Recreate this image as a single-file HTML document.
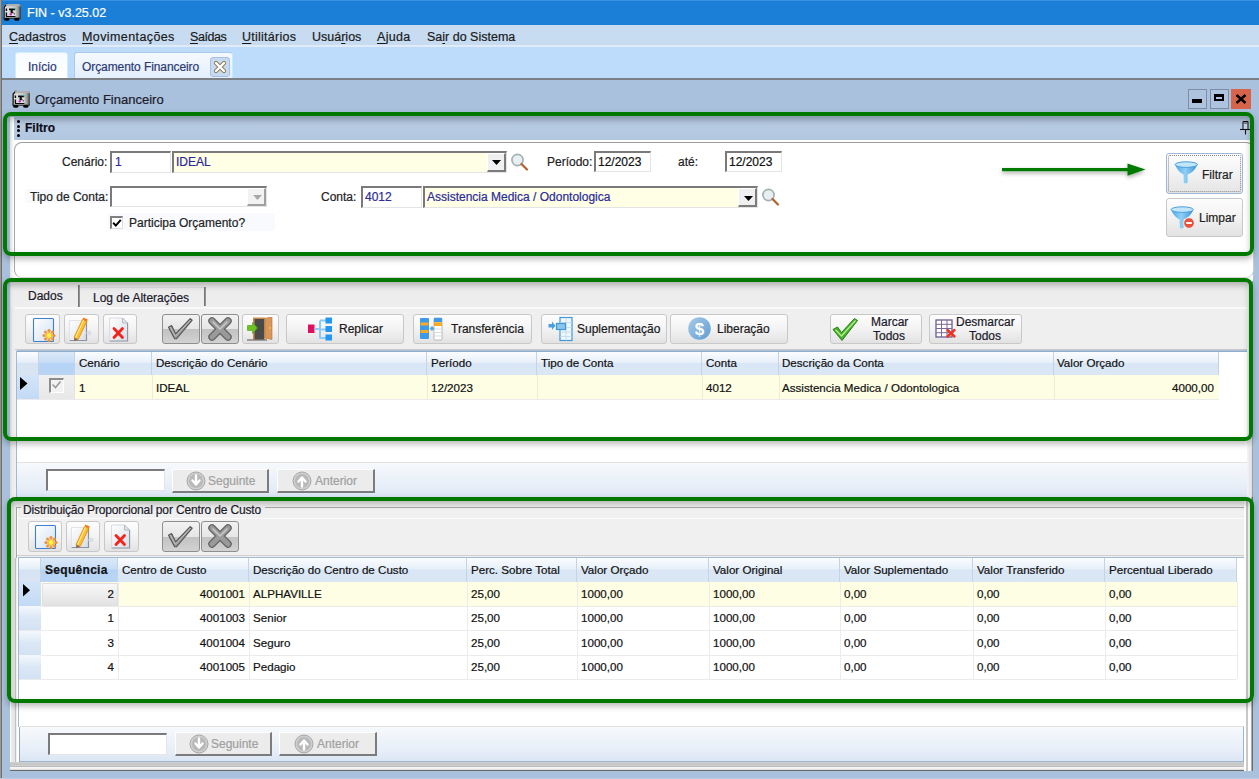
<!DOCTYPE html>
<html><head><meta charset="utf-8">
<style>
*{box-sizing:border-box}
html,body{margin:0;padding:0}
body{width:1259px;height:779px;overflow:hidden;position:relative;background:#a9c1dc;font-family:"Liberation Sans",sans-serif;font-size:12px;color:#000}
.a{position:absolute}
.t{position:absolute;white-space:nowrap;line-height:1;-webkit-text-stroke:0.2px currentColor}
u{text-decoration:none;border-bottom:1px solid #222;}
.inp{position:absolute;background:#fff;border-top:2px solid #7a7a7a;border-left:2px solid #7a7a7a;border-right:1px solid #e4e4e4;border-bottom:1px solid #e4e4e4}
.cmb{position:absolute;background:#ffffe6;border-top:2px solid #7a7a7a;border-left:2px solid #7a7a7a;border-right:1px solid #e4e4e4;border-bottom:1px solid #e4e4e4}
.ddb{position:absolute;right:0;top:0;bottom:0;width:19px;background:#f0f0f0;border-right:2px solid #7c7c7c;border-bottom:2px solid #7c7c7c;border-left:1px solid #fff;border-top:1px solid #fff}
.tb{position:absolute;border:1px solid #c8c8c8;border-radius:3px;background:linear-gradient(#fdfdfd,#f3f3f3 50%,#e2e2e2)}
.tbd{position:absolute;border:1px solid #8e8e8e;border-radius:3px;background:linear-gradient(#f2f2f2,#e6e6e6 50%,#c2c2c2 51%,#d2d2d2)}
.gh{position:absolute;background:linear-gradient(#fbfdff,#e8f0fa 45%,#d9e6f5 50%,#dbe7f5);border-right:1px solid #c5d3e2;height:24px}
.gr{position:absolute}
.green{position:absolute;border:4.6px solid #017901;border-radius:8px;box-shadow:0 3px 6px rgba(0,0,0,.28), inset 0 3px 6px rgba(0,0,0,.24)}
</style></head><body>

<!-- title bar -->
<svg width="0" height="0" style="position:absolute"><defs>
<linearGradient id="icg" x1="0" y1="0" x2="1" y2="0"><stop offset="0" stop-color="#ffffff"/><stop offset="0.12" stop-color="#d8d8d8"/><stop offset="0.7" stop-color="#c0c0c0"/><stop offset="0.85" stop-color="#9a9a9a"/><stop offset="1" stop-color="#303030"/></linearGradient>
<symbol id="appic" viewBox="0 0 18 18"><path d="M3 1 H15.5 Q17.8 1 17.8 3.5 V15 H0.4 V3.6z" fill="url(#icg)"/><path d="M0.4 3.8 L3.2 0.8 H5 L1.8 4.4 V15 H0.4z" fill="#151515"/><path d="M3 1 H15.5 Q17.8 1 17.8 3.5 L15.5 3 H3.5z" fill="#b0b0b0"/><path d="M0.4 14.6 H17.8 V15.8 H0.4z" fill="#2a2a2a"/><ellipse cx="3.8" cy="16.4" rx="2.8" ry="1.3" fill="#000"/><ellipse cx="13.8" cy="16.4" rx="2.8" ry="1.3" fill="#000"/><rect x="2.5" y="4.5" width="10" height="9.5" fill="#dedede"/><path d="M2.7 5.5h1.4v2.4H2.7zM2.7 9.5h1.4v4H2.7zM3 13h9.5v1H3zM6 5.5h6.2v1.8H6zM7.6 7h2.2v3.2H7.6z" fill="#0a0a0a"/><circle cx="7.8" cy="11.2" r="1.2" fill="#d030c8"/><circle cx="11.8" cy="5.4" r="0.9" fill="#30b8b8"/><path d="M10.2 9.6l1.8 1.8" stroke="#111" stroke-width="0.9"/></symbol>
</defs></svg>
<div class="a" style="left:0;top:0;width:1259px;height:25px;background:#1b7fd8"></div>
<div class="a" style="left:0;top:0;width:1259px;height:1px;background:#3a90dc"></div>
<div class="a" style="left:0;top:0;width:1px;height:779px;background:#9a9a9a"></div>
<div class="a" style="left:1px;top:0;width:1px;height:779px;background:#6e6e6e"></div>
<svg class="a" style="left:3px;top:3px" width="18" height="18"><use href="#appic"/></svg>
<div class="t" style="left:27px;top:7px;font-size:12.5px;color:#fff">FIN - v3.25.02</div>

<!-- menu -->
<div class="a" style="left:2px;top:25px;width:1257px;height:21px;background:#c8dcf1"></div>
<div class="a" style="left:2px;top:45px;width:1257px;height:2px;background:#e0ebf7"></div>
<div class="t" style="left:9px;top:31px;font-size:12.5px;color:#1a1a1a"><span style="text-decoration:underline;text-decoration-thickness:1px;text-underline-offset:1.5px">C</span>adastros</div>
<div class="t" style="left:82px;top:31px;font-size:12.5px;color:#1a1a1a;letter-spacing:0.4px"><span style="text-decoration:underline;text-decoration-thickness:1px;text-underline-offset:1.5px">M</span>ovimentações</div>
<div class="t" style="left:190px;top:31px;font-size:12.5px;color:#1a1a1a;letter-spacing:-0.45px"><span style="text-decoration:underline;text-decoration-thickness:1px;text-underline-offset:1.5px">S</span>aídas</div>
<div class="t" style="left:242px;top:31px;font-size:12.5px;color:#1a1a1a;letter-spacing:0.25px"><span style="text-decoration:underline;text-decoration-thickness:1px;text-underline-offset:1.5px">U</span>tilitários</div>
<div class="t" style="left:312px;top:31px;font-size:12.5px;color:#1a1a1a">Usuá<span style="text-decoration:underline;text-decoration-thickness:1px;text-underline-offset:1.5px">r</span>ios</div>
<div class="t" style="left:377px;top:31px;font-size:12.5px;color:#1a1a1a;letter-spacing:0.3px"><span style="text-decoration:underline;text-decoration-thickness:1px;text-underline-offset:1.5px">A</span>juda</div>
<div class="t" style="left:427px;top:31px;font-size:12.5px;color:#1a1a1a">Sa<span style="text-decoration:underline;text-decoration-thickness:1px;text-underline-offset:1.5px">i</span>r do Sistema</div>

<!-- tab strip -->
<div class="a" style="left:2px;top:47px;width:1257px;height:31px;background:#bddcfc"></div>
<div class="a" style="left:15px;top:52px;width:53px;height:26px;background:linear-gradient(#f7fbff,#fff);border:1px solid #d2ecfb;border-bottom:none;border-radius:3px 3px 0 0"></div>
<div class="t" style="left:28px;top:61px;color:#2c3a72">Início</div>
<div class="a" style="left:74px;top:52px;width:159px;height:26px;background:linear-gradient(#f5f9fe,#e4effc);border:1px solid #a9c9ee;border-bottom:none;border-right-color:#b8f0ff;border-radius:3px 3px 0 0"></div>
<div class="t" style="left:82px;top:61px;color:#2c3a72;letter-spacing:-0.08px">Orçamento Financeiro</div>
<div class="a" style="left:210px;top:57px;width:20px;height:20px;background:#c8daf2;border:1px solid #a5c0e6;border-radius:3px"></div>
<svg class="a" style="left:213px;top:60px" width="14" height="14" viewBox="0 0 14 14"><path d="M3 3L11 11M11 3L3 11" stroke="#8a7a50" stroke-width="4.2" stroke-linecap="round"/><path d="M3 3L11 11M11 3L3 11" stroke="#fff" stroke-width="2.4" stroke-linecap="round"/></svg>

<!-- window frame -->
<div class="a" style="left:2px;top:78px;width:1257px;height:2px;background:#7b7f86"></div>

<!-- window title -->
<svg class="a" style="left:12px;top:90px" width="18" height="18"><use href="#appic"/></svg>
<div class="t" style="left:35px;top:93px;font-size:13px;color:#1b1b2b">Orçamento Financeiro</div>
<div class="a" style="left:1188px;top:89px;width:19px;height:20px;border:1px solid #7d8da3;background:#aec4de"></div>
<div class="a" style="left:1192px;top:99px;width:10px;height:4px;background:#000"></div>
<div class="a" style="left:1210px;top:89px;width:19px;height:20px;border:1px solid #7d8da3;background:#aec4de"></div>
<div class="a" style="left:1214px;top:94px;width:10px;height:7px;border:2px solid #000;border-top-width:3px"></div>
<div class="a" style="left:1231px;top:89px;width:20px;height:20px;background:#d5644b"></div>
<svg class="a" style="left:1235px;top:94px" width="12" height="10" viewBox="0 0 12 10"><path d="M1.5 1L10.5 9M10.5 1L1.5 9" stroke="#000" stroke-width="2.4"/></svg>

<!-- ============ FILTRO SECTION ============ -->
<!-- left/right client borders -->
<div class="a" style="left:10px;top:117px;width:4px;height:164px;background:linear-gradient(90deg,#e6e6e6,#fff)"></div>
<div class="a" style="left:10px;top:281px;width:7px;height:216px;background:linear-gradient(90deg,#d8d8d8,#ececec 30%,#f2f2f2)"></div>
<div class="a" style="left:10px;top:497px;width:10px;height:274px;background:linear-gradient(90deg,#fff 0,#fff 10%,#ececec 12%,#e4e4e4 48%,#c2c2c2 52%,#c2c2c2 62%,#fff 66%,#fff 86%,#8ea8c8 88%)"></div>
<div class="a" style="left:1247px;top:281px;width:5px;height:490px;background:linear-gradient(90deg,#f4f4f4,#e0e0e0)"></div>
<div class="a" style="left:1252px;top:281px;width:1px;height:490px;background:#9aa3ad"></div>
<!-- filtro header -->
<div class="a" style="left:14px;top:117px;width:1239px;height:23px;background:linear-gradient(#a9bcd4,#b6cae2 40%,#b2c7e1)"></div>
<div class="a" style="left:17px;top:120px;width:3px;height:3px;border-radius:50%;background:#000"></div>
<div class="a" style="left:17px;top:125px;width:3px;height:3px;border-radius:50%;background:#000"></div>
<div class="a" style="left:17px;top:129px;width:3px;height:3px;border-radius:50%;background:#000"></div>
<div class="a" style="left:17px;top:134px;width:3px;height:3px;border-radius:50%;background:#000"></div>
<div class="t" style="left:25px;top:122px;font-size:12px;font-weight:bold;color:#0d0d1a">Filtro</div>
<svg class="a" style="left:1239px;top:120px" width="12" height="16" viewBox="0 0 12 16"><path d="M4 1.5h5v8H4z" fill="#c4d6ea" stroke="#111" stroke-width="1"/><path d="M4.5 3h4" stroke="#111" stroke-width="0.8"/><path d="M1 9.5h11" stroke="#111" stroke-width="1.1"/><path d="M6.5 10v4.5" stroke="#111" stroke-width="1.1"/></svg>
<!-- panel bg -->
<div class="a" style="left:14px;top:140px;width:1239px;height:141px;background:#fff"></div>
<div class="a" style="left:14px;top:142px;width:1240px;height:136px;border:1px solid #9b9b9b;border-radius:8px;border-right-color:#ccc;border-left-color:#a8a8a8;border-bottom-color:#dcdcdc;background:#fff"></div>

<div class="t" style="left:62px;top:156px;color:#222">Cenário:</div>
<div class="inp" style="left:110px;top:151px;width:61px;height:22px"></div>
<div class="t" style="left:115px;top:156px;color:#2a2a9a">1</div>
<div class="cmb" style="left:172px;top:151px;width:335px;height:22px"><div class="ddb"></div></div>
<div class="t" style="left:176px;top:156px;color:#2a2a9a">IDEAL</div>
<svg class="a" style="left:492px;top:160px" width="9" height="5"><path d="M0 0h9L4.5 5z" fill="#000"/></svg>
<svg class="a" style="left:510px;top:153px" width="20" height="19" viewBox="0 0 20 19"><circle cx="7.5" cy="7" r="5.6" fill="#e8eef1" stroke="#9fb1b2" stroke-width="1.6"/><path d="M11.5 11l5.5 5.5" stroke="#b4612d" stroke-width="2.2" stroke-linecap="round"/></svg>

<div class="t" style="left:547px;top:156px;color:#222">Período:</div>
<div class="inp" style="left:594px;top:151px;width:57px;height:21px"></div>
<div class="t" style="left:598px;top:156px;font-size:12px;color:#111">12/2023</div>
<div class="t" style="left:678px;top:156px;color:#222">até:</div>
<div class="inp" style="left:725px;top:151px;width:57px;height:21px"></div>
<div class="t" style="left:729px;top:156px;font-size:12px;color:#111">12/2023</div>

<div class="a" style="left:25px;top:189px;width:84px;height:14px;background:#f8fafd"></div>
<div class="t" style="left:30px;top:191px;color:#222">Tipo de Conta:</div>
<div class="inp" style="left:110px;top:186px;width:157px;height:21px"><div class="ddb" style="background:#f2f2f2;border-right-color:#a0a0a0;border-bottom-color:#a0a0a0"></div></div>
<svg class="a" style="left:253px;top:195px" width="9" height="5"><path d="M0 0h9L4.5 5z" fill="#a8a8a8"/></svg>

<div class="a" style="left:108px;top:213px;width:167px;height:18px;background:#f8fafd"></div>
<div class="a" style="left:110px;top:216px;width:13px;height:13px;background:#fff;border-top:2px solid #808080;border-left:2px solid #808080;border-right:1px solid #ddd;border-bottom:1px solid #ddd"></div>
<svg class="a" style="left:112px;top:218px" width="10" height="10" viewBox="0 0 10 10"><path d="M1.2 4.8L3.8 7.6L8.8 1.8" fill="none" stroke="#000" stroke-width="2"/></svg>
<div class="t" style="left:129px;top:217px;color:#222">Participa Orçamento?</div>

<div class="t" style="left:321px;top:191px;color:#222">Conta:</div>
<div class="inp" style="left:361px;top:186px;width:61px;height:22px"></div>
<div class="t" style="left:365px;top:191px;color:#2a2a9a">4012</div>
<div class="cmb" style="left:423px;top:186px;width:335px;height:22px"><div class="ddb"></div></div>
<div class="t" style="left:427px;top:191px;color:#2a2a9a">Assistencia Medica / Odontologica</div>
<svg class="a" style="left:744px;top:196px" width="9" height="5"><path d="M0 0h9L4.5 5z" fill="#000"/></svg>
<svg class="a" style="left:761px;top:188px" width="20" height="19" viewBox="0 0 20 19"><circle cx="7.5" cy="7" r="5.6" fill="#e8eef1" stroke="#9fb1b2" stroke-width="1.6"/><path d="M11.5 11l5.5 5.5" stroke="#b4612d" stroke-width="2.2" stroke-linecap="round"/></svg>

<!-- filtrar / limpar -->
<div class="a" style="left:1166px;top:153px;width:77px;height:41px;border:1px solid #9db7d9;border-radius:3px;background:linear-gradient(#fdfdfd,#f2f2f2 50%,#e4e4e4)"><div class="a" style="left:1px;top:1px;right:1px;bottom:1px;border:1px dotted #8a8a8a;border-radius:2px"></div></div>
<svg class="a" style="left:1174px;top:161px" width="25" height="24" viewBox="0 0 25 24"><defs><linearGradient id="fg" x1="0" y1="0" x2="1" y2="0"><stop offset="0" stop-color="#4fa8e6"/><stop offset="0.45" stop-color="#8fd0f6"/><stop offset="1" stop-color="#3d95d8"/></linearGradient></defs><path d="M1 3.5 Q4 11 9.6 13.5 L9.8 21.5 Q11.2 23.5 13.6 21.8 L13.6 13.5 Q20.5 11 23.5 3.5z" fill="url(#fg)"/><ellipse cx="12.2" cy="3.6" rx="11.2" ry="2.8" fill="#bfe6fb" stroke="#4f9fd8" stroke-width="1"/></svg>
<div class="t" style="left:1202px;top:169px;font-size:12px;color:#222">Filtrar</div>
<div class="a" style="left:1166px;top:198px;width:77px;height:39px;border:1px solid #c8c8c8;border-radius:3px;background:linear-gradient(#fdfdfd,#f2f2f2 50%,#e2e2e2)"></div>
<svg class="a" style="left:1170px;top:206px" width="26" height="26" viewBox="0 0 26 26"><path d="M1 3.5 Q4 11 9.6 13.5 L9.8 21.5 Q11.2 23.5 13.6 21.8 L13.6 13.5 Q20.5 11 23.5 3.5z" fill="url(#fg)"/><ellipse cx="12.2" cy="3.6" rx="11.2" ry="2.8" fill="#bfe6fb" stroke="#4f9fd8" stroke-width="1"/><circle cx="19" cy="17" r="5.3" fill="#e5533d" stroke="#f7f7f7" stroke-width="0.8"/><path d="M16.2 17h5.6" stroke="#fff" stroke-width="2"/></svg>
<div class="t" style="left:1199px;top:212px;font-size:12px;color:#222">Limpar</div>

<!-- green arrow -->
<svg class="a" style="left:995px;top:158px" width="160" height="26" viewBox="0 0 160 26"><defs><filter id="sh" x="-10%" y="-50%" width="120%" height="200%"><feGaussianBlur in="SourceAlpha" stdDeviation="2"/><feOffset dy="2"/><feComponentTransfer><feFuncA type="linear" slope="0.35"/></feComponentTransfer><feMerge><feMergeNode/><feMergeNode in="SourceGraphic"/></feMerge></filter></defs><g filter="url(#sh)"><path d="M7 11.6h128" stroke="#067a06" stroke-width="3.4"/><path d="M132.5 5.5L150.5 11.6L132.5 17.7z" fill="#067a06"/></g></svg>

<!-- green box 1 -->
<div class="green" style="left:2.5px;top:112.3px;width:1251px;height:143.3px"></div>


<!-- ============ SYMBOLS ============ -->
<svg width="0" height="0" style="position:absolute">
<defs>
<linearGradient id="docg" x1="0" y1="0" x2="1" y2="1"><stop offset="0" stop-color="#ffffff"/><stop offset="1" stop-color="#cfe0f3"/></linearGradient>
<linearGradient id="docw" x1="0" y1="0" x2="1" y2="1"><stop offset="0" stop-color="#ffffff"/><stop offset="1" stop-color="#d8dde4"/></linearGradient>
<symbol id="i-new" viewBox="0 0 24 26"><rect x="1.5" y="1.5" width="20" height="23" rx="1" fill="url(#docg)" stroke="#3d7fd0" stroke-width="1.1"/><g transform="translate(17,18.5)"><g fill="#f0903a"><circle cx="0" cy="-5" r="1.6"/><circle cx="0" cy="5" r="1.6"/><circle cx="-5" cy="0" r="1.6"/><circle cx="5" cy="0" r="1.6"/><circle cx="-3.5" cy="-3.5" r="1.5"/><circle cx="3.5" cy="3.5" r="1.5"/><circle cx="-3.5" cy="3.5" r="1.5"/><circle cx="3.5" cy="-3.5" r="1.5"/></g><circle r="3.6" fill="#f6b43a"/><circle r="2.4" fill="#fff04a"/></g></symbol>
<symbol id="i-edit" viewBox="0 0 24 26"><path d="M1.5 4.5h17v20h-17z" fill="url(#docw)"/><path d="M18.5 4.5v20h-17" fill="none" stroke="#8a93a3" stroke-width="1.2"/><path d="M1.5 24.5v-20h17" fill="none" stroke="#dfe3ea" stroke-width="1"/><ellipse cx="21" cy="17" rx="2.6" ry="2.2" fill="#dadee4"/><path d="M6 21.5 L14.5 3.5 L18.8 5.5 L10.2 23.5z" fill="#fbc02d" stroke="#e28a10" stroke-width="0.8"/><path d="M14.5 3.5 L18.8 5.5 L19.8 3.4 L15.5 1.4z" fill="#f57c22"/><path d="M6 21.5 L10.2 23.5 L6.3 25.2z" fill="#8a6a4a"/><path d="M15.6 4.2 L7.5 21.8" stroke="#fff3a0" stroke-width="1"/></symbol>
<symbol id="i-del" viewBox="0 0 24 26"><path d="M1.6 1h13l5 5v18H1.6z" fill="url(#docw)"/><path d="M19.6 6v18H1.6" fill="none" stroke="#8a93a3" stroke-width="1.1"/><path d="M1.6 24V1h13" fill="none" stroke="#d6dae2" stroke-width="1"/><path d="M14.6 1v5h5z" fill="#e4e8ee" stroke="#a6adb8" stroke-width="0.8"/><path d="M6 11.5l8.5 9M14.5 11.5l-8.5 9" stroke="#f3231b" stroke-width="2.8" stroke-linecap="round"/></symbol>
<symbol id="i-chk" viewBox="0 0 30 24"><path d="M2.5 10.2 L5.6 8.6 L9.6 16.8 L24.2 1.6 L26.2 3.2 L10.4 21.8 L8.6 21.8z" fill="#9a9a9a" stroke="#555" stroke-width="1.1" stroke-linejoin="round"/><path d="M4.2 10 L9.4 19.2 L24.6 3" fill="none" stroke="#d0d0d0" stroke-width="0.7"/></symbol>
<symbol id="i-x" viewBox="0 0 26 26"><path d="M5 5 L21 21 M21 5 L5 21" stroke="#666" stroke-width="7.5" stroke-linecap="round"/><path d="M5 5 L21 21 M21 5 L5 21" stroke="#9a9a9a" stroke-width="5" stroke-linecap="round"/><path d="M6 6 L13 13 M20 6 L13 13" stroke="#c9c9c9" stroke-width="1.5" stroke-linecap="round"/></symbol>
<symbol id="i-srch" viewBox="0 0 20 19"><circle cx="7.5" cy="7" r="5.6" fill="#e8eef1" stroke="#9fb1b2" stroke-width="1.6"/><path d="M11.5 11l5.5 5.5" stroke="#b4612d" stroke-width="2.2" stroke-linecap="round"/></symbol>
<symbol id="i-down" viewBox="0 0 20 20"><circle cx="10" cy="10" r="9" fill="#cfcfcf" stroke="#a8a8a8" stroke-width="1"/><circle cx="10" cy="10" r="7" fill="#b9b9b9"/><path d="M10 4.5v8M6.5 9.5L10 13.5L13.5 9.5" stroke="#fff" stroke-width="2.4" fill="none" stroke-linecap="round" stroke-linejoin="round"/></symbol>
<symbol id="i-up" viewBox="0 0 20 20"><circle cx="10" cy="10" r="9" fill="#cfcfcf" stroke="#a8a8a8" stroke-width="1"/><circle cx="10" cy="10" r="7" fill="#b9b9b9"/><path d="M10 15.5v-8M6.5 10.5L10 6.5L13.5 10.5" stroke="#fff" stroke-width="2.4" fill="none" stroke-linecap="round" stroke-linejoin="round"/></symbol>
</defs></svg>

<!-- ============ DADOS SECTION ============ -->
<div class="a" style="left:11px;top:281px;width:1236px;height:27px;background:linear-gradient(#e2e2e2,#ececec 35%,#eeeeee)"></div>
<div class="a" style="left:15px;top:307px;width:1232px;height:2px;background:#fafafa"></div>
<div class="a" style="left:15px;top:309px;width:1232px;height:40px;background:#efefef"></div>
<div class="a" style="left:15px;top:349px;width:1232px;height:1px;background:#cacaca"></div>
<!-- tabs -->
<div class="a" style="left:78px;top:285px;width:2px;height:22px;background:linear-gradient(90deg,#6a6a6a,#a0a0a0)"></div>
<div class="a" style="left:204px;top:287px;width:2px;height:19px;background:linear-gradient(90deg,#6a6a6a,#a0a0a0)"></div>
<div class="a" style="left:80px;top:287px;width:124px;height:1px;background:#dcdcdc"></div>
<div class="t" style="left:28px;top:290px;color:#1a1a2a">Dados</div>
<div class="t" style="left:93px;top:292px;color:#1a1a2a">Log de Alterações</div>

<!-- toolbar buttons -->
<div class="tb" style="left:25px;top:314px;width:35px;height:30px"></div>
<svg class="a" style="left:32px;top:317px" width="24" height="26"><use href="#i-new"/></svg>
<div class="tb" style="left:64px;top:314px;width:35px;height:30px"></div>
<svg class="a" style="left:68px;top:316px" width="24" height="26"><use href="#i-edit"/></svg>
<div class="tb" style="left:103px;top:314px;width:34px;height:30px"></div>
<svg class="a" style="left:108px;top:317px" width="24" height="26"><use href="#i-del"/></svg>
<div class="tbd" style="left:162px;top:314px;width:38px;height:30px"></div>
<svg class="a" style="left:166px;top:317px" width="30" height="24"><use href="#i-chk"/></svg>
<div class="tbd" style="left:201px;top:314px;width:38px;height:30px"></div>
<svg class="a" style="left:207px;top:316px" width="26" height="26"><use href="#i-x"/></svg>
<div class="tb" style="left:242px;top:314px;width:37px;height:30px"></div>
<svg class="a" style="left:246px;top:317px" width="30" height="24" viewBox="0 0 30 24"><path d="M7 0.5h12v22H7z" fill="#c98a4a"/><path d="M8.5 2h9.5v20.5H8.5z" fill="#4a4a4a"/><path d="M19 1.5L26 -0.5V22.5L19 21z" fill="#d8965a" stroke="#b27238" stroke-width="0.6"/><circle cx="24" cy="11" r="0.9" fill="#f2c84a"/><path d="M1 23h20" stroke="#555" stroke-width="1"/><path d="M1.5 8.5h5V5.5l5 5.5-5 5.5v-3h-5z" fill="#6cc21f" stroke="#4a9a12" stroke-width="0.6"/></svg>

<div class="tb" style="left:286px;top:314px;width:118px;height:30px"></div>
<svg class="a" style="left:306px;top:316px" width="28" height="26" viewBox="0 0 28 26"><rect x="2" y="8.5" width="6.5" height="8.5" fill="#e01060"/><path d="M8.5 13H14M14 4.5V22.5M14 4.5H20M14 13.5H20M14 22H20" stroke="#8ccaf6" stroke-width="2"/><rect x="19.5" y="1.5" width="6.5" height="6" fill="#2196f3"/><rect x="19.5" y="10" width="6.5" height="6" fill="#2196f3"/><rect x="19.5" y="18.5" width="6.5" height="6" fill="#2196f3"/></svg>
<div class="t" style="left:339px;top:323px;color:#1a1a1a">Replicar</div>

<div class="tb" style="left:413px;top:314px;width:119px;height:30px"></div>
<svg class="a" style="left:419px;top:317px" width="24" height="24" viewBox="0 0 24 24"><rect x="1" y="1" width="9" height="21" rx="1" fill="#3d9ae8"/><rect x="1.5" y="5.5" width="8" height="3" fill="#f7a826"/><rect x="1.5" y="13" width="8" height="3" fill="#f7a826"/><rect x="15" y="1" width="8" height="22" rx="1" fill="#fff" stroke="#b8b8b8" stroke-width="1"/><rect x="15" y="1" width="8" height="4" fill="#3d9ae8"/><rect x="15" y="5.2" width="8" height="3.8" fill="#f7a826"/><path d="M16 12h6M16 15.5h6M16 19h6" stroke="#cfdfe8" stroke-width="1"/><path d="M10.5 11.5L13 9L15.5 11.5L13 14z" fill="#5aa6dd"/></svg>
<div class="t" style="left:451px;top:323px;color:#1a1a1a">Transferência</div>

<div class="tb" style="left:541px;top:314px;width:126px;height:30px"></div>
<svg class="a" style="left:547px;top:316px" width="28" height="26" viewBox="0 0 28 26"><rect x="13" y="1.5" width="12" height="23" fill="#eef7fd" stroke="#3f97d6" stroke-width="1.2"/><path d="M13 6.5H25M13 11.5H25M13 16H25M13 20.5H25M19 1.5V24.5" stroke="#bfd6e6" stroke-width="0.8"/><rect x="9.5" y="7.5" width="9" height="6" fill="#8cc4ea" stroke="#3f97d6" stroke-width="1.2"/><path d="M1.5 8h3.5V5.5l3.5 4.3-3.5 4.3v-2.6H1.5z" fill="#4d9fe0"/></svg>
<div class="t" style="left:577px;top:323px;color:#1a1a1a">Suplementação</div>

<div class="tb" style="left:670px;top:314px;width:118px;height:30px"></div>
<svg class="a" style="left:688px;top:317px" width="24" height="24" viewBox="0 0 24 24"><defs><linearGradient id="lg$" x1="0" y1="0" x2="1" y2="1"><stop offset="0" stop-color="#a9cae8"/><stop offset="1" stop-color="#5e9ed3"/></linearGradient></defs><circle cx="11.5" cy="11.5" r="11.3" fill="url(#lg$)"/><text x="11.5" y="17.5" font-family="Liberation Sans" font-weight="bold" font-size="17" fill="#fff" text-anchor="middle">$</text></svg>
<div class="t" style="left:717px;top:323px;color:#1a1a1a">Liberação</div>

<div class="tb" style="left:830px;top:314px;width:92px;height:30px"></div>
<svg class="a" style="left:832px;top:317px" width="27" height="25" viewBox="0 0 27 25"><path d="M1 12.5L5.5 10L9.5 15.5L22.5 1.5L25.5 3.5L10 23.5z" fill="#43b02a" stroke="#2a7f18" stroke-width="1"/><path d="M3.5 12.8L9.5 19L23.5 3.5" fill="none" stroke="#b7ef8a" stroke-width="1.3"/></svg>
<div class="t" style="left:871px;top:316px;color:#1a1a2a">Marcar</div>
<div class="t" style="left:873px;top:330px;color:#1a1a2a">Todos</div>

<div class="tb" style="left:929px;top:314px;width:93px;height:30px"></div>
<svg class="a" style="left:935px;top:319px" width="22" height="20" viewBox="0 0 22 20"><rect x="1" y="1" width="16" height="17" fill="#fff" stroke="#6c5c8c" stroke-width="1.3"/><path d="M1 5.3H17M1 9.5H17M1 13.7H17M6.5 1V18M12 1V18" stroke="#7a6a98" stroke-width="1"/><path d="M12.5 11l7 6.5M19.5 11l-7 6.5" stroke="#ee3322" stroke-width="2.4" stroke-linecap="round"/></svg>
<div class="t" style="left:956px;top:316px;color:#1a1a2a">Desmarcar</div>
<div class="t" style="left:969px;top:330px;color:#1a1a2a">Todos</div>

<!-- grid 1 -->
<div class="a" style="left:16px;top:351px;width:1231px;height:111px;background:#fff;border-left:1px solid #a3b9d2;border-top:1px solid #93aeca"></div>
<div class="a" style="left:16px;top:462px;width:1px;height:35px;background:#a3b9d2"></div>
<div class="gh" style="left:17px;top:352px;height:23px;width:22px;background:linear-gradient(#fbfdff,#e6eef8 45%,#d6e3f2 50%,#d9e5f3)"></div>
<div class="gh" style="left:39px;top:352px;height:23px;width:36px;background:linear-gradient(#dbe9f9,#c8ddf6 45%,#b5d3f6 50%,#b9d5f5)"></div>
<div class="gh" style="left:75px;top:352px;height:23px;width:77px"></div>
<div class="gh" style="left:152px;top:352px;height:23px;width:275px"></div>
<div class="gh" style="left:427px;top:352px;height:23px;width:110px"></div>
<div class="gh" style="left:537px;top:352px;height:23px;width:165px"></div>
<div class="gh" style="left:702px;top:352px;height:23px;width:77px"></div>
<div class="gh" style="left:779px;top:352px;height:23px;width:275px"></div>
<div class="gh" style="left:1054px;top:352px;height:23px;width:165px"></div>
<div class="t" style="left:79px;top:357px;font-size:11.6px;color:#111">Cenário</div>
<div class="t" style="left:156px;top:357px;font-size:11.6px;color:#111">Descrição do Cenário</div>
<div class="t" style="left:431px;top:357px;font-size:11.6px;color:#111">Período</div>
<div class="t" style="left:541px;top:357px;font-size:11.6px;color:#111">Tipo de Conta</div>
<div class="t" style="left:706px;top:357px;font-size:11.6px;color:#111">Conta</div>
<div class="t" style="left:782px;top:357px;font-size:11.6px;color:#111">Descrição da Conta</div>
<div class="t" style="left:1057px;top:357px;font-size:11.6px;color:#111">Valor Orçado</div>
<!-- row -->
<div class="a" style="left:17px;top:375px;width:22px;height:24px;background:linear-gradient(#d3e4f8,#c3daf6)"></div>
<svg class="a" style="left:20px;top:377px" width="8" height="13"><path d="M0 0L7.5 6.5L0 13z" fill="#000"/></svg>
<div class="a" style="left:39px;top:375px;width:36px;height:24px;background:linear-gradient(#f0f0f0,#e8e8e8);border-right:1px solid #e3e3e3"></div>
<div class="a" style="left:49px;top:378px;width:15px;height:15px;background:#f2f2f2;border-top:2px solid #8c8c8c;border-left:2px solid #8c8c8c;border-right:1px solid #fff;border-bottom:1px solid #fff"></div>
<svg class="a" style="left:51px;top:380px" width="11" height="10" viewBox="0 0 11 10"><path d="M1.5 4.5L4.5 7.5L9.5 1.5" fill="none" stroke="#9a9a9a" stroke-width="1.6"/></svg>
<div class="a" style="left:75px;top:375px;width:1144px;height:24px;background:#fefee4"></div>
<div class="a" style="left:152px;top:375px;width:1px;height:24px;background:#ececd8"></div>
<div class="a" style="left:427px;top:375px;width:1px;height:24px;background:#ececd8"></div>
<div class="a" style="left:537px;top:375px;width:1px;height:24px;background:#ececd8"></div>
<div class="a" style="left:702px;top:375px;width:1px;height:24px;background:#ececd8"></div>
<div class="a" style="left:779px;top:375px;width:1px;height:24px;background:#ececd8"></div>
<div class="a" style="left:1054px;top:375px;width:1px;height:24px;background:#ececd8"></div>
<div class="a" style="left:17px;top:399px;width:1202px;height:1px;background:#ebebeb"></div>
<div class="t" style="left:79px;top:382px;font-size:11.6px;color:#111">1</div>
<div class="t" style="left:156px;top:382px;font-size:11.6px;color:#111">IDEAL</div>
<div class="t" style="left:431px;top:382px;font-size:11.6px;color:#111">12/2023</div>
<div class="t" style="left:706px;top:382px;font-size:11.6px;color:#111">4012</div>
<div class="t" style="left:782px;top:382px;font-size:11.6px;color:#111">Assistencia Medica / Odontologica</div>
<div class="t" style="left:1172px;top:382px;font-size:11.6px;color:#111">4000,00</div>

<!-- nav 1 -->
<div class="a" style="left:17px;top:462px;width:1230px;height:35px;background:linear-gradient(#f7f9fc,#e6eef8 70%,#dbe6f4);border-top:1px solid #e8e0e0"></div>
<div class="inp" style="left:46px;top:469px;width:119px;height:22px"></div>
<div class="a" style="left:172px;top:469px;width:97px;height:24px;background:#ececec;border-top:1px solid #fff;border-left:1px solid #fff;border-right:2px solid #7c7c7c;border-bottom:2px solid #7c7c7c"></div>
<svg class="a" style="left:186px;top:471px" width="20" height="20"><use href="#i-down"/></svg>
<div class="t" style="left:208px;top:475px;color:#a0a0a0">Seguinte</div>
<div class="a" style="left:277px;top:469px;width:98px;height:24px;background:#ececec;border-top:1px solid #fff;border-left:1px solid #fff;border-right:2px solid #7c7c7c;border-bottom:2px solid #7c7c7c"></div>
<svg class="a" style="left:292px;top:471px" width="20" height="20"><use href="#i-up"/></svg>
<div class="t" style="left:315px;top:475px;color:#a0a0a0">Anterior</div>

<!-- green box 2 -->
<div class="green" style="left:2.5px;top:277.8px;width:1250px;height:163.5px"></div>


<!-- ============ DISTRIBUICAO SECTION ============ -->
<div class="a" style="left:14px;top:497px;width:1233px;height:61px;background:#f0f0f0"></div>
<div class="a" style="left:16px;top:507px;width:1231px;height:51px;border-left:1px solid #a8a8a8;border-top:1px solid #a8a8a8;border-right:1px solid #a8a8a8"></div>
<div class="a" style="left:17px;top:518px;width:1228px;height:1px;background:#fbfbfb"></div>
<div class="a" style="left:17px;top:508px;width:1px;height:250px;background:#fff"></div>
<div class="a" style="left:21px;top:501px;width:244px;height:14px;background:#f0f0f0"></div>
<div class="t" style="left:23px;top:504px;color:#1a1a2a;letter-spacing:-0.15px">Distribuição Proporcional por Centro de Custo</div>
<div class="a" style="left:17px;top:555px;width:1228px;height:1px;background:#cfcfcf"></div>

<div class="tb" style="left:28px;top:521px;width:34px;height:31px"></div>
<svg class="a" style="left:34px;top:524px" width="24" height="26"><use href="#i-new"/></svg>
<div class="tb" style="left:66px;top:521px;width:34px;height:31px"></div>
<svg class="a" style="left:70px;top:523px" width="24" height="26"><use href="#i-edit"/></svg>
<div class="tb" style="left:104px;top:521px;width:35px;height:31px"></div>
<svg class="a" style="left:110px;top:524px" width="24" height="26"><use href="#i-del"/></svg>
<div class="tbd" style="left:162px;top:521px;width:38px;height:31px"></div>
<svg class="a" style="left:166px;top:525px" width="30" height="24"><use href="#i-chk"/></svg>
<div class="tbd" style="left:201px;top:521px;width:38px;height:31px"></div>
<svg class="a" style="left:207px;top:523px" width="26" height="26"><use href="#i-x"/></svg>

<!-- grid 2 -->
<div class="a" style="left:18px;top:557px;width:1227px;height:170px;background:#fff;border-left:1px solid #a3b9d2;border-top:1px solid #a3b9d2"></div>
<div class="gh" style="left:19px;top:558px;width:22px;background:linear-gradient(#fbfdff,#e6eef8 45%,#d6e3f2 50%,#d9e5f3)"></div>
<div class="gh" style="left:41px;top:558px;width:77px;background:linear-gradient(#dbe9f9,#c8ddf6 45%,#b5d3f6 50%,#b9d5f5)"></div>
<div class="t" style="left:45px;top:564px;font-weight:bold;color:#111;letter-spacing:0.3px">Sequência</div>
<div class="gh" style="left:118px;top:558px;width:131px"></div>
<div class="t" style="left:122px;top:564px;font-size:11.6px;color:#111">Centro de Custo</div>
<div class="gh" style="left:249px;top:558px;width:218px"></div>
<div class="t" style="left:253px;top:564px;font-size:11.6px;color:#111">Descrição do Centro de Custo</div>
<div class="gh" style="left:467px;top:558px;width:110px"></div>
<div class="t" style="left:471px;top:564px;font-size:11.6px;color:#111">Perc. Sobre Total</div>
<div class="gh" style="left:577px;top:558px;width:132px"></div>
<div class="t" style="left:581px;top:564px;font-size:11.6px;color:#111">Valor Orçado</div>
<div class="gh" style="left:709px;top:558px;width:131px"></div>
<div class="t" style="left:713px;top:564px;font-size:11.6px;color:#111">Valor Original</div>
<div class="gh" style="left:840px;top:558px;width:133px"></div>
<div class="t" style="left:844px;top:564px;font-size:11.6px;color:#111">Valor Suplementado</div>
<div class="gh" style="left:973px;top:558px;width:132px"></div>
<div class="t" style="left:977px;top:564px;font-size:11.6px;color:#111">Valor Transferido</div>
<div class="gh" style="left:1105px;top:558px;width:132px"></div>
<div class="t" style="left:1109px;top:564px;font-size:11.6px;color:#111">Percentual Liberado</div>
<div class="a" style="left:19px;top:582px;width:22px;height:24px;background:linear-gradient(#d3e4f8,#c3daf6)"></div>
<div class="a" style="left:41px;top:582px;width:1196px;height:24px;background:#fefee4"></div>
<div class="a" style="left:42px;top:583px;width:76px;height:23px;background:linear-gradient(#f8f8f8,#ebebeb 60%,#e2e2e2);border:1px solid #e0e0e0"></div>
<svg class="a" style="left:23px;top:584px" width="8" height="13"><path d="M0 0L7 6.2L0 12.4z" fill="#000"/></svg>
<div class="a" style="left:118px;top:582px;width:1px;height:24px;background:#ececec"></div>
<div class="a" style="left:249px;top:582px;width:1px;height:24px;background:#ececec"></div>
<div class="a" style="left:467px;top:582px;width:1px;height:24px;background:#ececec"></div>
<div class="a" style="left:577px;top:582px;width:1px;height:24px;background:#ececec"></div>
<div class="a" style="left:709px;top:582px;width:1px;height:24px;background:#ececec"></div>
<div class="a" style="left:840px;top:582px;width:1px;height:24px;background:#ececec"></div>
<div class="a" style="left:973px;top:582px;width:1px;height:24px;background:#ececec"></div>
<div class="a" style="left:1105px;top:582px;width:1px;height:24px;background:#ececec"></div>
<div class="a" style="left:19px;top:606px;width:1218px;height:1px;background:#ebebeb"></div>
<div class="t" style="right:1145px;top:588px;font-size:11.6px;color:#111">2</div>
<div class="t" style="right:1014px;top:588px;font-size:11.6px;color:#111">4001001</div>
<div class="t" style="left:253px;top:588px;font-size:11.6px;color:#111">ALPHAVILLE</div>
<div class="t" style="left:471px;top:588px;font-size:11.6px;color:#111">25,00</div>
<div class="t" style="left:581px;top:588px;font-size:11.6px;color:#111">1000,00</div>
<div class="t" style="left:713px;top:588px;font-size:11.6px;color:#111">1000,00</div>
<div class="t" style="left:844px;top:588px;font-size:11.6px;color:#111">0,00</div>
<div class="t" style="left:977px;top:588px;font-size:11.6px;color:#111">0,00</div>
<div class="t" style="left:1109px;top:588px;font-size:11.6px;color:#111">0,00</div>
<div class="a" style="left:19px;top:606px;width:22px;height:24px;background:linear-gradient(#f4f8fd,#dbe7f5 50%,#d3e2f3)"></div>
<div class="a" style="left:118px;top:606px;width:1px;height:24px;background:#ececec"></div>
<div class="a" style="left:249px;top:606px;width:1px;height:24px;background:#ececec"></div>
<div class="a" style="left:467px;top:606px;width:1px;height:24px;background:#ececec"></div>
<div class="a" style="left:577px;top:606px;width:1px;height:24px;background:#ececec"></div>
<div class="a" style="left:709px;top:606px;width:1px;height:24px;background:#ececec"></div>
<div class="a" style="left:840px;top:606px;width:1px;height:24px;background:#ececec"></div>
<div class="a" style="left:973px;top:606px;width:1px;height:24px;background:#ececec"></div>
<div class="a" style="left:1105px;top:606px;width:1px;height:24px;background:#ececec"></div>
<div class="a" style="left:19px;top:630px;width:1218px;height:1px;background:#ebebeb"></div>
<div class="t" style="right:1145px;top:612px;font-size:11.6px;color:#111">1</div>
<div class="t" style="right:1014px;top:612px;font-size:11.6px;color:#111">4001003</div>
<div class="t" style="left:253px;top:612px;font-size:11.6px;color:#111">Senior</div>
<div class="t" style="left:471px;top:612px;font-size:11.6px;color:#111">25,00</div>
<div class="t" style="left:581px;top:612px;font-size:11.6px;color:#111">1000,00</div>
<div class="t" style="left:713px;top:612px;font-size:11.6px;color:#111">1000,00</div>
<div class="t" style="left:844px;top:612px;font-size:11.6px;color:#111">0,00</div>
<div class="t" style="left:977px;top:612px;font-size:11.6px;color:#111">0,00</div>
<div class="t" style="left:1109px;top:612px;font-size:11.6px;color:#111">0,00</div>
<div class="a" style="left:19px;top:631px;width:22px;height:24px;background:linear-gradient(#f4f8fd,#dbe7f5 50%,#d3e2f3)"></div>
<div class="a" style="left:118px;top:631px;width:1px;height:24px;background:#ececec"></div>
<div class="a" style="left:249px;top:631px;width:1px;height:24px;background:#ececec"></div>
<div class="a" style="left:467px;top:631px;width:1px;height:24px;background:#ececec"></div>
<div class="a" style="left:577px;top:631px;width:1px;height:24px;background:#ececec"></div>
<div class="a" style="left:709px;top:631px;width:1px;height:24px;background:#ececec"></div>
<div class="a" style="left:840px;top:631px;width:1px;height:24px;background:#ececec"></div>
<div class="a" style="left:973px;top:631px;width:1px;height:24px;background:#ececec"></div>
<div class="a" style="left:1105px;top:631px;width:1px;height:24px;background:#ececec"></div>
<div class="a" style="left:19px;top:655px;width:1218px;height:1px;background:#ebebeb"></div>
<div class="t" style="right:1145px;top:637px;font-size:11.6px;color:#111">3</div>
<div class="t" style="right:1014px;top:637px;font-size:11.6px;color:#111">4001004</div>
<div class="t" style="left:253px;top:637px;font-size:11.6px;color:#111">Seguro</div>
<div class="t" style="left:471px;top:637px;font-size:11.6px;color:#111">25,00</div>
<div class="t" style="left:581px;top:637px;font-size:11.6px;color:#111">1000,00</div>
<div class="t" style="left:713px;top:637px;font-size:11.6px;color:#111">1000,00</div>
<div class="t" style="left:844px;top:637px;font-size:11.6px;color:#111">0,00</div>
<div class="t" style="left:977px;top:637px;font-size:11.6px;color:#111">0,00</div>
<div class="t" style="left:1109px;top:637px;font-size:11.6px;color:#111">0,00</div>
<div class="a" style="left:19px;top:655px;width:22px;height:24px;background:linear-gradient(#f4f8fd,#dbe7f5 50%,#d3e2f3)"></div>
<div class="a" style="left:118px;top:655px;width:1px;height:24px;background:#ececec"></div>
<div class="a" style="left:249px;top:655px;width:1px;height:24px;background:#ececec"></div>
<div class="a" style="left:467px;top:655px;width:1px;height:24px;background:#ececec"></div>
<div class="a" style="left:577px;top:655px;width:1px;height:24px;background:#ececec"></div>
<div class="a" style="left:709px;top:655px;width:1px;height:24px;background:#ececec"></div>
<div class="a" style="left:840px;top:655px;width:1px;height:24px;background:#ececec"></div>
<div class="a" style="left:973px;top:655px;width:1px;height:24px;background:#ececec"></div>
<div class="a" style="left:1105px;top:655px;width:1px;height:24px;background:#ececec"></div>
<div class="a" style="left:19px;top:679px;width:1218px;height:1px;background:#ebebeb"></div>
<div class="t" style="right:1145px;top:661px;font-size:11.6px;color:#111">4</div>
<div class="t" style="right:1014px;top:661px;font-size:11.6px;color:#111">4001005</div>
<div class="t" style="left:253px;top:661px;font-size:11.6px;color:#111">Pedagio</div>
<div class="t" style="left:471px;top:661px;font-size:11.6px;color:#111">25,00</div>
<div class="t" style="left:581px;top:661px;font-size:11.6px;color:#111">1000,00</div>
<div class="t" style="left:713px;top:661px;font-size:11.6px;color:#111">1000,00</div>
<div class="t" style="left:844px;top:661px;font-size:11.6px;color:#111">0,00</div>
<div class="t" style="left:977px;top:661px;font-size:11.6px;color:#111">0,00</div>
<div class="t" style="left:1109px;top:661px;font-size:11.6px;color:#111">0,00</div>

<div class="a" style="left:1237px;top:582px;width:1px;height:97px;background:#ececec"></div>
<div class="a" style="left:1244px;top:557px;width:1px;height:170px;background:#a3b9d2"></div>
<!-- nav 2 -->
<div class="a" style="left:20px;top:726px;width:1224px;height:36px;background:linear-gradient(#f7f9fc,#e6eef8 70%,#dbe6f4);border-top:1px solid #e8e0e0;border-bottom:1px solid #9db5cf;border-right:1px solid #9db5cf"></div>
<div class="inp" style="left:48px;top:733px;width:119px;height:22px"></div>
<div class="a" style="left:175px;top:732px;width:97px;height:24px;background:#ececec;border-top:1px solid #fff;border-left:1px solid #fff;border-right:2px solid #7c7c7c;border-bottom:2px solid #7c7c7c"></div>
<svg class="a" style="left:189px;top:734px" width="20" height="20"><use href="#i-down"/></svg>
<div class="t" style="left:211px;top:738px;color:#a0a0a0">Seguinte</div>
<div class="a" style="left:279px;top:732px;width:98px;height:24px;background:#ececec;border-top:1px solid #fff;border-left:1px solid #fff;border-right:2px solid #7c7c7c;border-bottom:2px solid #7c7c7c"></div>
<svg class="a" style="left:294px;top:734px" width="20" height="20"><use href="#i-up"/></svg>
<div class="t" style="left:317px;top:738px;color:#a0a0a0">Anterior</div>
<!-- window bottom frame -->
<div class="a" style="left:10px;top:762px;width:1243px;height:9px;background:linear-gradient(#d0d0d0 0,#c4c4c4 30%,#d6d6d6 42%,#b4b4b4 52%,#f6f6f6 60%,#eeeeee 82%,#6a6a6a 92%)"></div>
<div class="a" style="left:1244px;top:497px;width:9px;height:274px;background:linear-gradient(90deg,#fff 0,#fff 18%,#c8c8c8 26%,#c8c8c8 40%,#fff 48%,#fafafa 80%,#6e6e6e 86%)"></div>

<!-- green box 3 -->
<div class="green" style="left:7px;top:497px;width:1247px;height:206px"></div>

<div class="a" style="left:0;top:778px;width:1259px;height:1px;background:#b8cce4"></div>
</body></html>
